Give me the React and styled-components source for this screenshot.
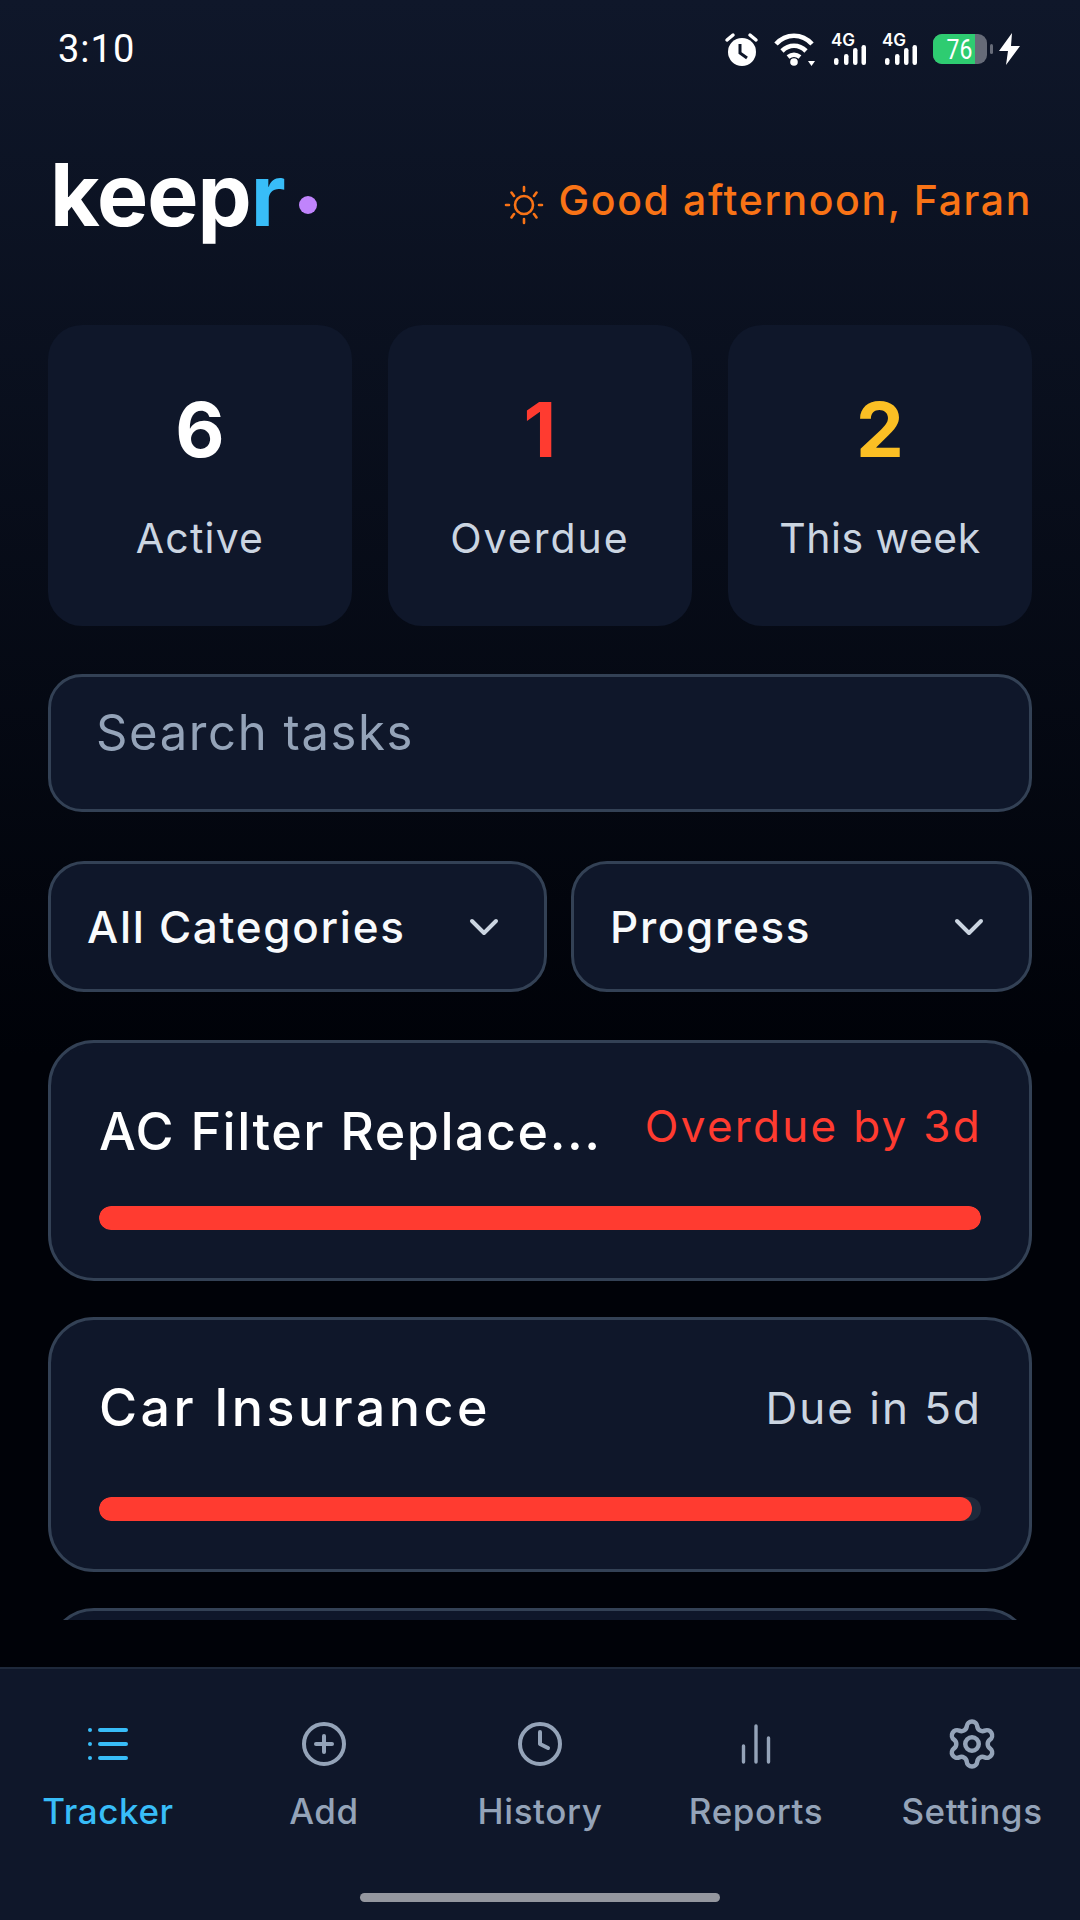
import React from "react";
import styled, { createGlobalStyle } from "styled-components";
import { ChevronDown, List, CirclePlus, Clock, Settings } from "lucide-react";

const GlobalStyle = createGlobalStyle`
  html, body {
    margin: 0;
    padding: 0;
    background: #000208;
  }
  * {
    box-sizing: border-box;
  }
`;

const Page = styled.div`
  width: 1080px;
  height: 1920px;
  display: flex;
  flex-direction: column;
  overflow: hidden;
  font-family: "Inter", "Liberation Sans", sans-serif;
  background: linear-gradient(180deg, #0f172a 0%, #000208 55%);
`;

const StatusBar = styled.div`
  height: 98px;
  flex: none;
  display: flex;
  justify-content: space-between;
  align-items: center;
  padding: 0 60px 0 58px;
  color: #fff;
`;

const Time = styled.span`
  font-family: "Roboto", sans-serif;
  font-size: 38px;
  letter-spacing: 1px;
`;

const StatusIcons = styled.div`
  display: flex;
  align-items: center;
  gap: 16px;
  svg {
    overflow: visible;
  }
`;

const Charging = styled.div`
  display: flex;
  align-items: center;
  gap: 6px;
`;

const Header = styled.header`
  flex: none;
  height: 187px;
  display: flex;
  justify-content: space-between;
  align-items: center;
  padding: 16px 48px 0 50px;
`;

const Logo = styled.div`
  display: flex;
  align-items: flex-end;
  height: 86px;
  margin-bottom: 10px;
  font-size: 86px;
  font-weight: 700;
  letter-spacing: -1px;
  color: #fff;
  line-height: 1;
`;

const LogoAccent = styled.span`
  color: #38bdf8;
`;

const LogoDot = styled.i`
  width: 18px;
  height: 18px;
  border-radius: 50%;
  background: #c084fc;
  margin-left: 14px;
  margin-bottom: 24px;
`;

const Greeting = styled.div`
  display: flex;
  align-items: center;
  gap: 15px;
  font-size: 41px;
  font-weight: 500;
  letter-spacing: 1.6px;
  color: #f97316;
  svg {
    margin-top: 10px;
  }
`;

const Content = styled.main`
  flex: 1;
  min-height: 0;
  display: flex;
  flex-direction: column;
  padding: 40px 48px 0;
`;

const Stats = styled.div`
  display: grid;
  grid-template-columns: repeat(3, 304px);
  justify-content: space-between;
`;

const StatCard = styled.div`
  height: 301px;
  border-radius: 34px;
  background: #0f172a;
  display: flex;
  flex-direction: column;
  align-items: center;
  padding-top: 62px;
`;

const StatValue = styled.div`
  font-size: 76px;
  line-height: 84px;
  font-weight: 700;
  color: ${(p) => p.$color};
`;

const StatLabel = styled.div`
  margin-top: 42px;
  font-size: 41px;
  line-height: 50px;
  letter-spacing: ${(p) => p.$tracking}px;
  color: #cbd5e1;
`;

const Search = styled.div`
  margin-top: 48px;
  height: 138px;
  border: 3px solid #334155;
  border-radius: 34px;
  background: #0f172a;
  padding: 27px 45px;
  font-size: 49px;
  line-height: 58px;
  letter-spacing: 1.6px;
  color: #94a3b8;
`;

const Filters = styled.div`
  margin-top: 49px;
  display: grid;
  grid-template-columns: 499px 461px;
  justify-content: space-between;
`;

const Select = styled.div`
  height: 131px;
  border: 3px solid #334155;
  border-radius: 36px;
  background: #0f172a;
  display: flex;
  align-items: center;
  justify-content: space-between;
  padding: 0 36px 0 36px;
  font-size: 44px;
  font-weight: 500;
  letter-spacing: 1.7px;
  color: #f8fafc;
`;

const TaskList = styled.div`
  margin-top: 48px;
  height: 580px;
  overflow: hidden;
  display: flex;
  flex-direction: column;
  gap: 36px;
`;

const TaskCard = styled.div`
  flex: none;
  height: ${(p) => p.$height}px;
  border: 3px solid #334155;
  border-radius: 46px;
  background: #0f172a;
  padding: ${(p) => p.$top}px 48px 0;
`;

const TaskRow = styled.div`
  display: flex;
  justify-content: space-between;
  align-items: ${(p) => p.$align};
`;

const TaskName = styled.div`
  font-size: 52px;
  line-height: 60px;
  font-weight: 500;
  letter-spacing: ${(p) => p.$tracking}px;
  color: #fff;
`;

const TaskDue = styled.div`
  font-size: 44px;
  line-height: 48px;
  letter-spacing: ${(p) => p.$tracking}px;
  margin-right: -1px;
  color: ${(p) => p.$color};
`;

const Track = styled.div`
  margin-top: ${(p) => p.$gap}px;
  height: 24px;
  border-radius: 12px;
  background: #1e293b;
  overflow: hidden;
`;

const Fill = styled.div`
  height: 100%;
  border-radius: 12px;
  background: #ff3b30;
`;

const BottomNav = styled.nav`
  flex: none;
  height: 253px;
  margin-top: 47px;
  border-top: 2px solid #1e293b;
  background: #0f172a;
  display: flex;
  flex-direction: column;
`;

const NavItems = styled.div`
  display: grid;
  grid-template-columns: repeat(5, 216px);
  padding-top: 51px;
`;

const NavItem = styled.div`
  display: flex;
  flex-direction: column;
  align-items: center;
  gap: 21px;
  font-size: 35px;
  line-height: 44px;
  font-weight: 500;
  letter-spacing: 0.6px;
  color: ${(p) => (p.$active ? "#38bdf8" : "#94a3b8")};
`;

const NavIcon = styled.div`
  height: 48px;
  display: flex;
  align-items: center;
  justify-content: center;
`;

const HomeBar = styled.div`
  width: 360px;
  height: 9px;
  border-radius: 5px;
  background: #94979f;
  margin: 60px auto 0;
`;

const AlarmIcon = () => (
  <svg width="33" height="33" viewBox="0 0 33 33">
    <circle cx="17" cy="19" r="14" fill="#fff" />
    <path d="M15 11v9l7 5" fill="none" stroke="#0e1628" strokeWidth="3" />
    <path d="M2 7l6-5M31 7l-6-5" stroke="#fff" strokeWidth="3.5" strokeLinecap="round" />
  </svg>
);

const WifiIcon = () => (
  <svg width="41" height="33" viewBox="0 0 41 33" fill="none" stroke="#fff" strokeWidth="4.6">
    <path d="M2 11c10-11 26-11 36 0" />
    <path d="M8 18c7-7 17-7 24 0" />
    <path d="M14 24c4-3 8-3 12 0" />
    <circle cx="20" cy="29" r="3.8" fill="#fff" stroke="none" />
    <path d="M34 28h7l-3.5 5z" fill="#fff" stroke="none" />
  </svg>
);

const SignalIcon = () => (
  <svg width="35" height="33" viewBox="0 0 35 33">
    <text x="0" y="13" fontFamily="Inter, sans-serif" fontSize="17" fontWeight="600" fill="#fff">4G</text>
    <rect x="3" y="25" width="4.5" height="7" rx="2.2" fill="#fff" />
    <rect x="13" y="21" width="4.5" height="11" rx="2.2" fill="#fff" />
    <rect x="22" y="15" width="4.5" height="17" rx="2.2" fill="#fff" />
    <rect x="30.5" y="12" width="4.5" height="20" rx="2.2" fill="#fff" />
  </svg>
);

const BatteryIcon = () => (
  <svg width="60" height="30" viewBox="0 0 60 30">
    <rect width="54" height="30" rx="9" fill="#666b78" />
    <path d="M9 0h33v30H9a9 9 0 0 1-9-9V9a9 9 0 0 1 9-9z" fill="#2ecc71" />
    <rect x="57" y="10" width="3" height="10" rx="1.5" fill="#666b78" />
    <text
      transform="translate(26.5 25) scale(0.82 1)"
      textAnchor="middle"
      fontFamily="Roboto, sans-serif"
      fontSize="28"
      fill="#fff"
    >
      76
    </text>
  </svg>
);

const BoltIcon = () => (
  <svg width="21" height="32" viewBox="0 0 21 32">
    <path d="M13 0L0 18h9l-2 14L21 13h-9z" fill="#fff" />
  </svg>
);

const SunIcon = () => (
  <svg width="40" height="40" viewBox="0 0 40 40" fill="none" stroke="currentColor" strokeWidth="2.6" strokeLinecap="round">
    <circle cx="20" cy="20" r="9" />
    <path d="M20 2v4M20 34v4M2 20h3M35 20h3M7.5 7.5l2.5 3.5M30 29l2.5 3.5M7.5 32.5l2.5-3.5M30 11l2.5-3.5" />
  </svg>
);

const BarsIcon = ({ size }) => (
  <svg width={size} height={size} viewBox="0 0 48 48" fill="none" stroke="currentColor" strokeWidth="3.4" strokeLinecap="round">
    <path d="M11.5 26v16M24 6v36M36.5 18v24" />
  </svg>
);

const stats = [
  { value: "6", label: "Active", color: "#ffffff", tracking: 1.2 },
  { value: "1", label: "Overdue", color: "#ff3b30", tracking: 2 },
  { value: "2", label: "This week", color: "#fbbf24", tracking: 0.5 },
];

const navItems = [
  { label: "Tracker", Icon: List, active: true, size: 48 },
  { label: "Add", Icon: CirclePlus, size: 48 },
  { label: "History", Icon: Clock, size: 48 },
  { label: "Reports", Icon: BarsIcon, size: 48 },
  { label: "Settings", Icon: Settings, size: 54 },
];

export default function App() {
  return (
    <Page>
      <GlobalStyle />
      <StatusBar>
        <Time>3:10</Time>
        <StatusIcons>
          <AlarmIcon />
          <WifiIcon />
          <SignalIcon />
          <SignalIcon />
          <Charging>
            <BatteryIcon />
            <BoltIcon />
          </Charging>
        </StatusIcons>
      </StatusBar>
      <Header>
        <Logo>
          keep<LogoAccent>r</LogoAccent>
          <LogoDot />
        </Logo>
        <Greeting>
          <SunIcon />
          Good afternoon, Faran
        </Greeting>
      </Header>
      <Content>
        <Stats>
          {stats.map((s) => (
            <StatCard key={s.label}>
              <StatValue $color={s.color}>{s.value}</StatValue>
              <StatLabel $tracking={s.tracking}>{s.label}</StatLabel>
            </StatCard>
          ))}
        </Stats>
        <Search>Search tasks</Search>
        <Filters>
          <Select>
            All Categories
            <ChevronDown size={48} color="#cbd5e1" strokeWidth={2} />
          </Select>
          <Select>
            Progress
            <ChevronDown size={48} color="#cbd5e1" strokeWidth={2} />
          </Select>
        </Filters>
        <TaskList>
          <TaskCard $height={241} $top={59}>
            <TaskRow $align="flex-start">
              <TaskName $tracking={1.5}>AC Filter Replace...</TaskName>
              <TaskDue $color="#ff3b30" $tracking={2.3}>Overdue by 3d</TaskDue>
            </TaskRow>
            <Track $gap={44}>
              <Fill style={{ width: "100%" }} />
            </Track>
          </TaskCard>
          <TaskCard $height={255} $top={58}>
            <TaskRow $align="center">
              <TaskName $tracking={3.4}>Car Insurance</TaskName>
              <TaskDue $color="#cbd5e1" $tracking={2}>Due in 5d</TaskDue>
            </TaskRow>
            <Track $gap={59}>
              <Fill style={{ width: "99%" }} />
            </Track>
          </TaskCard>
          <TaskCard $height={241} $top={59} />
        </TaskList>
      </Content>
      <BottomNav>
        <NavItems>
          {navItems.map(({ label, Icon, active, size }) => (
            <NavItem key={label} $active={active}>
              <NavIcon>
                <Icon size={size} strokeWidth={2} />
              </NavIcon>
              {label}
            </NavItem>
          ))}
        </NavItems>
        <HomeBar />
      </BottomNav>
    </Page>
  );
}
